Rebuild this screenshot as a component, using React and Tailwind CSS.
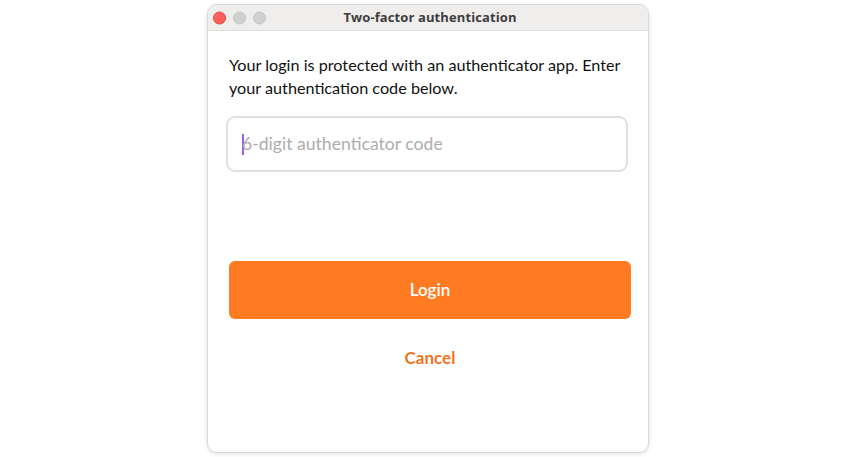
export default function App() {
  return (
    <div className="w-full h-[457px] bg-white flex justify-center pt-[4px]" style={{ fontFamily: 'Lato, "Noto Sans", sans-serif' }}>
      <div className="w-[442px] h-[449px] rounded-[10px] border border-[#d9d9d9] shadow-[0_1px_4px_rgba(0,0,0,0.12)] overflow-hidden flex flex-col bg-white">
        <div className="relative h-[26px] shrink-0 bg-[#efeeed] border-b border-[#dcdcdc] flex items-center justify-center">
          <div className="absolute left-[5px] top-1/2 -translate-y-1/2 flex gap-[7px]">
            <span className="w-[13px] h-[13px] rounded-full bg-[#fe5f57] border border-[#e2463f]" />
            <span className="w-[13px] h-[13px] rounded-full bg-[#d0d0d0] border border-[#c4c4c4]" />
            <span className="w-[13px] h-[13px] rounded-full bg-[#d0d0d0] border border-[#c4c4c4]" />
          </div>
          <span className="pl-[4px] text-[13px] font-bold text-[#3d3d3d] tracking-[0.1px]" style={{ fontFamily: '"Open Sans", sans-serif' }}>Two-factor authentication</span>
        </div>
        <div className="flex flex-col px-[21px] pt-[22px]">
          <p className="text-[16.2px] leading-[23px] text-[#111111]">
            Your login is protected with an authenticator app. Enter your authentication code below.
          </p>
          <div className="mt-[17px] -ml-[3px] w-[402px] h-[56px] rounded-[9px] border-2 border-[#e0e0e0] flex items-center pl-[14px]">
            <span className="w-[2px] h-[21px] bg-[#9b5de5] -mr-[2px]" />
            <span className="text-[17.6px] text-[#adadad]">6-digit authenticator code</span>
          </div>
          <button className="mt-[89px] w-[402px] h-[58px] rounded-[6px] bg-[#ff7b22] text-white text-[17px] font-semibold flex items-center justify-center">
            Login
          </button>
          <button className="mt-[27px] w-[402px] h-[24px] text-[#f0731c] text-[17px] font-bold flex items-center justify-center">
            Cancel
          </button>
        </div>
      </div>
    </div>
  );
}
